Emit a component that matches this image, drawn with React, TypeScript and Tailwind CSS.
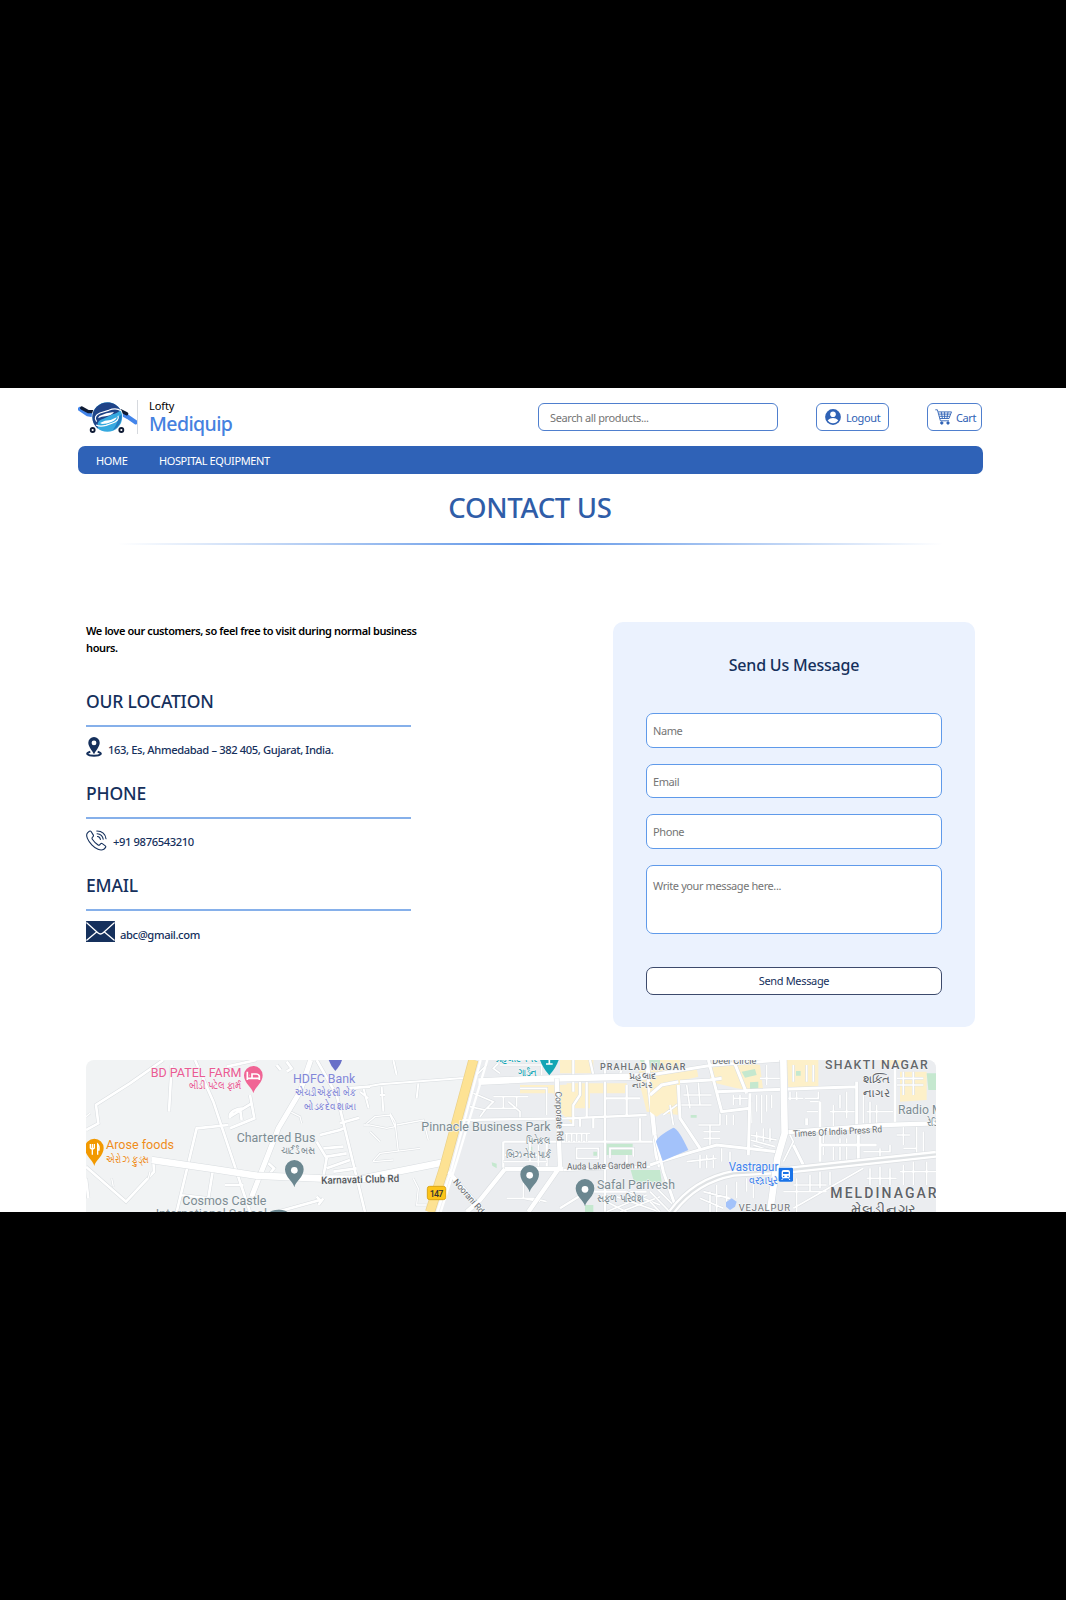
import type { ReactNode } from "react";

type LabelProps = {
  x: number;
  y: number;
  size: number;
  w: number;
  fill?: string;
  weight?: number;
  rotate?: number;
  spaced?: boolean;
  children: ReactNode;
};

function Label({ x, y, size, w, fill = "#7d8c93", weight = 400, rotate = 0, spaced = false, children }: LabelProps) {
  return (
    <text
      x={x}
      y={y}
      fontSize={size}
      textLength={w}
      lengthAdjust={spaced ? "spacing" : "spacingAndGlyphs"}
      fontWeight={weight}
      fill={fill}
      stroke="#f4f6f7"
      strokeWidth={4}
      strokeLinejoin="round"
      paintOrder="stroke"
      transform={rotate ? `rotate(${rotate} ${x} ${y})` : undefined}
    >
      {children}
    </text>
  );
}

function Pin({ x, y, color, children }: { x: number; y: number; color: string; children?: ReactNode }) {
  return (
    <g transform={`translate(${x} ${y})`}>
      <path d="M0 0C-4-18-28-30-28-54a28 28 0 0 1 56 0C28-30 4-18 0 0Z" fill={color} />
      {children ?? <circle cy={-51} r={10} fill="#fff" />}
    </g>
  );
}

function Roads({ d, w }: { d: string; w: number }) {
  return (
    <>
      <path d={d} stroke="#d9dde0" strokeWidth={w + 3} />
      <path d={d} stroke="#fff" strokeWidth={w} />
    </>
  );
}

function CityMap() {
  return (
    <svg className="block h-[152px] w-[850px] rounded-t-lg" viewBox="86 1060 850 152" fontFamily="Roboto, 'Noto Sans', sans-serif">
      <rect x="86" y="1060" width="850" height="152" fill="#f1f3f4" />
      <path d="M475 1060H936V1212H440Z" fill="#ebedf0" />

      <g transform="translate(360 1045) scale(.33333)" fill="none">
        <path d="M480 120H600L640 118V240L600 200L580 145H480ZM620 115H800V145H690V190H620ZM840 45H960V210L860 200L835 100ZM600 45H700V85H600Z" fill="#fdf0c9" />
        <path d="M735 296H818V330H735ZM812 375H900V410H822ZM840 45H900V68H850ZM395 352L410 356V370L397 362ZM675 480H700V501H675ZM505 305h12v14h-12ZM700 320h12v12h-12Z" fill="#c5e8cf" />
        <Roads w={6} d="M0 128L60 118L300 100L340 100M10 128L26 190M65 125L70 200M100 45L110 90M170 160L175 115M60 150H75M0 140L25 160" />
        <Roads w={4} d="M15 240L45 215L90 210L105 245L80 250L20 238M90 205L105 230L115 320M110 240L190 225L205 285M38 350L60 325L180 310M40 350L100 345M30 260L60 290M160 400L175 430L170 480L200 480" />
        <Roads w={5} d="M340 145L400 170L380 190L470 190M400 155H505M430 155V190M470 155V185M480 130H560V210M420 60H545V95M420 85L400 70L415 55M350 90L380 60M445 170L480 200V220M330 185L375 195L360 215" />
        <Roads w={7} d="M300 225L620 220L860 210M430 290V372M430 290H600M435 330H560M560 290V372M600 290H880M735 110V440M600 240L640 240V180L660 150V110M680 110V220M660 220V245M700 220V250M735 160H840M640 140V45M800 120V215M735 90V45M690 45L700 90M780 90L790 50M840 220V290M605 375L870 365M700 440H860M600 490L680 440M735 440V500M800 330V365" />
        <Roads w={5} d="M615 265H690M620 265V290M635 265V290M650 265V290M665 265V290M680 265V290M510 290V350M535 300V370M430 350H560M490 400V460L540 470M440 460H520L560 470M440 540V501M750 340L750 310H820V335M650 310H715V340H650ZM770 455L900 501M800 440L900 480M740 500L860 450M780 501L900 455M740 470L800 501" />
        <Roads w={20} d="M355 110L520 102L900 93" />
        <Roads w={13} d="M590 100L600 365L505 501M860 45L890 330L900 365M435 372H610M435 372L360 465L320 501M265 380L370 501" />
        <Roads w={20} d="M0 402L260 350" />
        <path d="M362 45L275 370L232 501M382 45L293 340L242 501" stroke="#fff" strokeWidth={7} />
        <path d="M340 45L252 370L210 501" stroke="#e9d08a" strokeWidth={30} />
        <path d="M340 45L252 370L210 501" stroke="#fde293" strokeWidth={26} />
      </g>

      <g transform="translate(70 1045) scale(.33333)" fill="none">
        <Roads w={8} d="M280 45L180 115L78 180L85 235L48 255M305 60L297 200M375 45L430 170L540 501M540 150L553 220L480 250M475 240L380 250L320 501M250 345L252 380L168 470L48 365M48 400L55 460M740 45L800 150L885 501M480 215L545 175M510 190L515 225M620 60L632 75M650 50L665 70L650 80M560 45L470 65M595 355L612 370L600 385M465 420H520M428 380L415 460L330 450M830 130L900 125M810 235L868 218M750 270L810 255L820 250M760 310L820 305M770 335L830 325M770 370L840 345M740 290L770 340L760 395M790 380L860 370M620 501L750 465L740 455M745 480L760 460M480 220C475 200 500 190 520 190" />
        <Roads w={4} d="M660 200L690 215L695 235M240 380L235 400M125 400L130 425M880 240H900M48 215L60 205" />
        <Roads w={15} d="M722 45L690 140L625 250L545 455" />
        <Roads w={20} d="M245 345L430 372L560 392L750 400L900 402" />
      </g>

      <g transform="translate(650 1045) scale(.33333)" fill="none">
        <path d="M0 95L60 85L85 130L70 180L20 215L0 200ZM70 75L140 70L145 95L80 110ZM180 70L270 50L330 60L340 140L260 130L180 110ZM410 45H505V130H415ZM750 80H830V165L750 170ZM690 45H760V65H690Z" fill="#fdf0c9" />
        <path d="M275 80L315 72L320 90L285 98ZM300 112L325 110V132H300ZM438 78H452V92H438ZM830 85H858V135H835ZM122 210H140V218H122ZM0 378L30 375L35 410H0Z" fill="#c5e8cf" />
        <Roads w={5} d="M40 210L80 180L185 180M60 180L70 240M110 120L120 190M145 110L150 180M100 150H185M180 240V300M160 260H210M160 280H210M145 240H210M210 205V240M230 210V240M250 210V240M300 270L380 285M300 285L375 305M310 300L370 320M320 260V290M340 250V290M360 250V290M305 170V235M320 150V200M335 150V235M350 150V200M365 150V190M250 160H295M250 150V180M270 150V180M415 160H460M420 140V165M440 140V165M465 160H505V140M480 170H510M470 200H510M550 180V260M540 200H620M570 150V190M590 140V220M640 150V235M660 170V235M680 180V235M650 200H730M520 260V330M550 300V345M570 280V345M590 280V345M640 320H720V300M690 310V345M760 245V300M740 270H780M800 245V330M820 260V320M760 310H800M740 100H820M740 120H820M760 80V150M790 80V150M350 60V120M330 100H390M430 60V110M470 60V110M490 60V110M150 330V370M170 330V370M190 330V370M215 310V350M240 320V350M110 350L200 340M410 250L430 290L400 350" />
        <Roads w={5} d="M200 420V501M230 420V470M260 410V460M290 400V440M310 410V460M160 440L240 460M150 460L220 490M180 440V501M440 400V501M480 390V440M510 380V430M540 380V420M660 370V420M690 365V420M720 370V420M760 360V420M790 350V420M830 350V420M650 400H740M750 380H858M400 440L530 440M430 420H530M0 440L60 501M0 470L30 501M20 430L70 480M640 370L430 490" />
        <Roads w={9} d="M0 90L190 60L400 45M0 150L35 120L85 110M90 110L180 105L215 100M175 45L215 200L300 190M85 120L90 220L150 310M0 360L30 350L130 320L200 300L380 320M300 145L295 330M200 140L620 125M250 45L290 145M735 45V240M620 110V250M470 220V240M510 170V350M625 270V360M510 300H680M430 300L470 380M15 270L40 380L75 480" />
        <Roads w={13} d="M404 262L700 240L858 235" />
        <path d="M18 290Q20 275 70 248Q85 250 115 315L38 348Z" fill="#a3c2fa" />
        <path d="M65 501C110 440 170 400 250 385L420 375L858 328" stroke="#dde0e3" strokeWidth={25} />
        <path d="M65 501C110 440 170 400 250 385L420 375L858 328" stroke="#fff" strokeWidth={21} />
        <path d="M65 501C110 440 170 400 250 385L420 375L858 328" stroke="#dfe2e4" strokeWidth={7} />
        <Roads w={20} d="M400 45L404 265L382 340L360 501" />
        <path d="M228 472L245 460L260 470L255 485L240 495L228 485Z" fill="#a3c2fa" />
      </g>

      <g transform="translate(70 1045) scale(.33333)">
        <Label x={242} y={95} size={38} w={272} fill="#ea5b93">BD PATEL FARM</Label>
        <Label x={356} y={132} size={30} w={158} fill="#ea5b93">બીડી પટેલ ફાર્મ</Label>
        <Pin x={550} y={145} color="#f06595">
          <path d="M-18-65V-40M-18-45H18V-40M18-45V-52Q16-58 8-58H-4V-46M-11-54h1" stroke="#fff" strokeWidth={5} fill="none" />
        </Pin>
        <Label x={108} y={312} size={37} w={204} fill="#ee8c1a">Arose foods</Label>
        <Label x={108} y={354} size={30} w={128} fill="#ee8c1a">એરોઝ ફુડ્સ</Label>
        <Pin x={73} y={363} color="#f29900">
          <path d="M-12-66V-54Q-6-48 0-54V-66M-6-66V-34M10-34V-66Q16-60 14-48H10" stroke="#fff" strokeWidth={4} fill="none" />
        </Pin>
        <path d="M776 45H816Q812 60 796 78Q782 62 776 45Z" fill="#6970c8" />
        <Label x={669} y={113} size={37} w={187} fill="#8286d8">HDFC Bank</Label>
        <Label x={674} y={152} size={30} w={182} fill="#8286d8">એચડીએફસી બેંક</Label>
        <Label x={702} y={196} size={30} w={154} fill="#8286d8">બોડકદેવ શાખા</Label>
        <Label x={500} y={290} size={37} w={236}>Chartered Bus</Label>
        <Label x={632} y={328} size={30} w={104}>ચાર્ટર્ડ બસ</Label>
        <Pin x={673} y={427} color="#6b8790" />
        <Label x={754} y={417} size={31} w={234} rotate={-1.5} weight={500} fill="#54585c">Karnavati Club Rd</Label>
        <Label x={337} y={479} size={37} w={252}>Cosmos Castle</Label>
        <Label x={257} y={519} size={37} w={334}>International School</Label>
        <path d="M598 504a28 10 0 0 1 56 0Z" fill="#6b8790" />
      </g>

      <g transform="translate(360 1045) scale(.33333)">
        <Label x={407} y={52} size={30} w={125} fill="#12a5b5">પ્રહલાદનગર</Label>
        <Label x={474} y={92} size={30} w={56} fill="#12a5b5">ગાર્ડન</Label>
        <path d="M540 45H596Q588 68 568 91Q548 68 540 45Z" fill="#12a5b5" />
        <path d="M558 57h20M568 45v12" stroke="#fff" strokeWidth={5} />
        <Label x={720} y={75} size={27} w={256} spaced weight={500} fill="#6e7276">PRAHLAD NAGAR</Label>
        <Label x={808} y={103} size={25} w={80} fill="#6e7276">પ્રહલાદ</Label>
        <Label x={816} y={130} size={25} w={60} fill="#6e7276">નાગર</Label>
        <Label x={184} y={257} size={37} w={388}>Pinnacle Business Park</Label>
        <Label x={498} y={297} size={30} w={74}>પિનેકલ</Label>
        <Label x={438} y={340} size={30} w={134}>બિઝનેસ પાર્ક</Label>
        <Label x={586} y={140} size={27} w={148} rotate={88} fill="#65696d">Corporate Rd</Label>
        <Label x={621} y={374} size={28} w={239} rotate={-1} fill="#65696d">Auda Lake Garden Rd</Label>
        <Label x={278} y={412} size={27} w={126} rotate={49} fill="#65696d">Noorani Rd</Label>
        <Pin x={509} y={442} color="#6b8790" />
        <Pin x={675} y={484} color="#6b8790" />
        <Label x={711} y={433} size={37} w={234}>Safal Parivesh</Label>
        <Label x={711} y={472} size={30} w={140}>સફળ પરિવેશ</Label>
        <rect x={202} y={424} width={55} height={40} rx={7} fill="#fcc419" stroke="#dba515" strokeWidth={3} />
        <text x={209} y={455} fontSize={27} textLength={41} fontWeight={500} fill="#333">147</text>
      </g>

      <g transform="translate(650 1045) scale(.33333)">
        <Label x={187} y={56} size={26} w={132} fill="#65696d">Deer Circle</Label>
        <Label x={525} y={73} size={37} w={308} spaced weight={500} fill="#63676b">SHAKTI NAGAR</Label>
        <Label x={640} y={114} size={32} w={78} fill="#5f6368">શક્તિ</Label>
        <Label x={640} y={157} size={32} w={80} fill="#5f6368">નાગર</Label>
        <Label x={744} y={208} size={37} w={155}>Radio Mir</Label>
        <Label x={830} y={243} size={30} w={60}>રેડિયો</Label>
        <Label x={430} y={276} size={27} w={267} rotate={-3} fill="#65696d">Times Of India Press Rd</Label>
        <Label x={236} y={378} size={36} w={149} fill="#3f83ee">Vastrapur</Label>
        <Label x={297} y={417} size={33} w={88} fill="#3f83ee">વસ્ત્રાપુર</Label>
        <rect x={386} y={368} width={43} height={42} rx={4} fill="#1a73e8" />
        <rect x={395} y={375} width={25} height={25} rx={6} fill="#fff" />
        <path d="M399 381h17v6h-17zM399 392h4v4h-4zM412 392h4v4h-4z" fill="#1a73e8" />
        <path d="M399 400l-4 5M416 400l4 5" stroke="#fff" strokeWidth={3} />
        <Label x={541} y={460} size={42} w={319} spaced weight={500} fill="#5f6368">MELDINAGAR</Label>
        <Label x={604} y={506} size={40} w={194} fill="#5f6368">મેલડીનગર</Label>
        <Label x={266} y={497} size={28} w={154} spaced fill="#6e7276">VEJALPUR</Label>
      </g>
    </svg>
  );
}

function Logo() {
  return (
    <svg className="h-8 w-[60px] shrink-0" viewBox="0 0 180 96">
      <path d="M6 24L28 39L50 43M124 34L150 48L173 64" fill="none" stroke="#4385ea" strokeWidth={13} strokeLinejoin="round" strokeLinecap="round" />
      <path d="M11 21L31 32L50 32M128 29L146 38" fill="none" stroke="#0e1a33" strokeWidth={10} strokeLinecap="round" />
      <circle cx={88} cy={48} r={47} fill="#fff" />
      <circle cx={88} cy={48} r={44.500} fill="#36a9df" />
      <path d="M131 40C132 62 122 80 104 88C114 74 120 62 120 50Z" fill="#2379bd" />
      <path d="M60 83C38 68 38 34 56 17C76-2 112-1 128 27C122 34 112 38 104 40L76 53C60 57 56 68 60 83Z" fill="#1f4387" />
      <path d="M129 29C118 22 106 22 92 28L66 36C52 42 48 52 56 62M120 44C124 54 116 62 104 66L84 73C70 77 62 76 54 72" fill="none" stroke="#fff" strokeWidth={3.500} />
      <path d="M64 45Q84 35 108 33Q100 44 82 46Q72 46 60 52Z" fill="#fff" />
      <path d="M66 66Q80 57 98 57L116 49Q114 58 102 62Q86 69 72 69Z" fill="#fff" />
      <circle cx={44} cy={87} r={6} fill="#fff" stroke="#0e1a33" strokeWidth={5.500} />
      <circle cx={130} cy={87} r={6} fill="#fff" stroke="#0e1a33" strokeWidth={5.500} />
    </svg>
  );
}

function UserIcon() {
  return (
    <svg className="size-4 shrink-0" viewBox="0 0 16 16">
      <circle cx={8} cy={8} r={7.9} fill="#2f62b5" />
      <circle cx={8} cy={5.2} r={2.8} fill="#fff" />
      <path d="M2.7 11.2Q5 8.9 8 8.9t5.3 2.3A6.2 6.2 0 0 1 8 14.2a6.2 6.2 0 0 1-5.3-3Z" fill="#fff" />
    </svg>
  );
}

function CartIcon() {
  return (
    <svg className="h-4 w-[17px] shrink-0" viewBox="0 0 17 16" fill="none" stroke="#2f62b5" strokeWidth={0.9}>
      <path d="M.3.8H2.4L5.4 11.8H14M3.2 2.9H16.5L14 9.5H4.9M3.8 5.1H15.6M4.3 7.3H14.8M6.3 2.9L7.4 9.5M9.6 2.9V9.5M13 2.9L11.9 9.5" />
      <circle cx={6.8} cy={14} r={1.2} fill="#2f62b5" />
      <circle cx={13} cy={14} r={1.2} fill="#2f62b5" />
    </svg>
  );
}

function LocationIcon() {
  return (
    <svg className="h-5 w-4 shrink-0" viewBox="0 0 16 20">
      <path d="M4.3 14.7C-1 16 .8 18.8 8 18.8S17 16 11.700 14.700" fill="none" stroke="#15305c" strokeWidth={2} />
      <path d="M8 17.200C6 13.500 2.300 9.500 2.300 5.800a5.700 5.700 0 0 1 11.400 0C13.700 9.500 10 13.500 8 17.200Z" fill="#15305c" />
      <circle cx={8} cy={5.900} r={2.400} fill="#fff" />
    </svg>
  );
}

function PhoneIcon() {
  return (
    <svg className="size-[21px] shrink-0" viewBox="0 0 21 21" fill="none" stroke="#15305c" strokeWidth={1.1} strokeLinecap="round" strokeLinejoin="round">
      <path d="M3.400 1.200L1.500 2.900C-.8 5.500 2.100 11 5.800 14.900S14.700 21.300 17.800 19.300L19.500 17.500Q20.200 16.700 19.300 15.900L16.300 13.600Q15.500 13.100 14.800 13.700L13.500 15Q12.700 15.500 11.800 14.800Q8.600 12.500 6.300 9.200Q5.700 8.300 6.300 7.500L7.200 6.400Q7.700 5.700 7.200 4.900L5.100 1.500Q4.400.6 3.400 1.200Z" />
      <path d="M11.500 6.500Q14 6.700 14.400 9.500M11.100 3.700Q16.400 4 17.200 9.200M10.800 1Q19 1.200 20 8.800" />
    </svg>
  );
}

function MailIcon() {
  return (
    <svg className="h-[21px] w-[29px] shrink-0" viewBox="0 0 29 21">
      <rect width={29} height={21} rx={0.6} fill="#15305c" />
      <path d="M.4 1.500L11.800 11.800Q14.500 14.200 17.200 11.800L28.600 1.500M.4 19.500L10.600 10.900M28.600 19.500L18.400 10.900" fill="none" stroke="#fff" strokeWidth={1.3} />
    </svg>
  );
}

function ContactBlock({ title, titleClass, bodyClass, icon, children }: { title: string; titleClass: string; bodyClass: string; icon: ReactNode; children: ReactNode }) {
  return (
    <section className="w-[325px] text-[#15305c]">
      <h2 className={`border-b-2 border-[#86b0ea] text-[17.5px] leading-6 font-medium tracking-[-0.17px] ${titleClass}`}>{title}</h2>
      <div className={`flex items-start text-[11.2px] leading-4 font-medium tracking-[-0.38px] ${bodyClass}`}>
        {icon}
        {children}
      </div>
    </section>
  );
}

const field =
  "block w-full rounded-[7px] border border-[#5f9aea] bg-white px-1.5 text-[11px] tracking-[-0.4px] placeholder:text-[#757575] outline-none";

export default function App() {
  return (
    <div className="h-[1600px] w-[1066px] overflow-hidden bg-black py-[388px] font-['Noto_Sans','Open_Sans',sans-serif]">
      <main className="h-[824px] overflow-hidden bg-white">
        <header className="flex h-[58px] pr-[84px] pl-[78px]">
          <div className="mt-3 flex h-[34px] w-[460px]">
            <div className="-mr-px pt-[1px]"><Logo /></div>
            <div className="h-[34px] w-px shrink-0 bg-[#d6d9de]" />
            <div className="ml-[11px] flex flex-col">
              <span className="mt-[-2px] h-4 text-[11px] leading-[15px] tracking-[-0.1px] text-black">Lofty</span>
              <span className="text-[19.5px] leading-5 font-medium tracking-[-0.6px] text-[#4581e0]">Mediquip</span>
            </div>
          </div>
          <input
            className="mt-[15px] h-7 w-[240px] rounded-[6px] border border-[#4f7fce] px-[11px] text-[11px] tracking-[-0.38px] placeholder:text-[#757575]"
            placeholder="Search all products..."
          />
          <button className="mt-[15px] ml-[38px] flex h-7 w-[73px] items-center rounded-[6px] border border-[#4f7fce] pl-2 text-[11px] text-[#2f62b5]">
            <UserIcon />
            <span className="mt-0.5 ml-[5px] tracking-[-0.4px]">Logout</span>
          </button>
          <button className="mt-[15px] ml-[38px] flex h-7 w-[55px] items-center rounded-[6px] border border-[#4f7fce] pl-[7px] text-[11px] text-[#2f62b5]">
            <CartIcon />
            <span className="mt-0.5 ml-1 tracking-[-0.4px]">Cart</span>
          </button>
        </header>

        <nav className="ml-[78px] flex h-7 w-[905px] items-center rounded-[7px] bg-[#2f62b7] pt-0.5 pl-[18px] text-[11px] text-white">
          <a className="w-[63px] tracking-[-0.35px]">HOME</a>
          <a className="tracking-[-0.4px]">HOSPITAL EQUIPMENT</a>
        </nav>

        <h1 className="mt-[14px] h-10 pr-1.5 text-center text-[27.5px] leading-10 font-medium tracking-[-0.3px] text-[#2f5da8]">CONTACT US</h1>
        <div className="mt-[15px] ml-[118px] h-0.5 w-[825px] bg-linear-to-r from-transparent via-[#5c93e6] to-transparent" />

        <div className="mt-[77px] flex h-[405px] pl-[86px]">
          <div className="w-[527px]">
            <p className="w-[340px] pt-px text-[11px] leading-[16.5px] font-semibold tracking-[-0.39px] text-black">We love our customers, so feel free to visit during normal business hours.</p>
            <ContactBlock title="OUR LOCATION" titleClass="mt-[33px] h-[38px]" bodyClass="pt-[10px] h-[54px]" icon={<LocationIcon />}>
              <span className="mt-[5px] ml-1.5 whitespace-nowrap">163, Es, Ahmedabad – 382 405, Gujarat, India.</span>
            </ContactBlock>
            <ContactBlock title="PHONE" titleClass="h-[38px]" bodyClass="pt-[11px] h-[54px]" icon={<PhoneIcon />}>
              <span className="mt-1 ml-1.5">+91 9876543210</span>
            </ContactBlock>
            <ContactBlock title="EMAIL" titleClass="h-[38px]" bodyClass="pt-[10px]" icon={<MailIcon />}>
              <span className="mt-1.5 ml-[5px]">abc@gmail.com</span>
            </ContactBlock>
          </div>

          <form className="h-[405px] w-[362px] rounded-[10px] bg-[#ebf2fe] px-[33px]" onSubmit={(e) => e.preventDefault()}>
            <h2 className="pt-[31px] text-center text-[16px] leading-6 font-medium tracking-[-0.2px] text-[#15305c]">Send Us Message</h2>
            <div className="mt-9 flex flex-col gap-4">
              <input className={`h-[35px] ${field}`} placeholder="Name" />
              <input className={`h-[34px] ${field}`} placeholder="Email" />
              <input className={`h-[35px] ${field}`} placeholder="Phone" />
              <textarea className={`h-[69px] resize-none pt-3 ${field}`} placeholder="Write your message here..." />
            </div>
            <button className="mt-[33px] h-7 w-full rounded-[7px] border border-[#3c4a6c] bg-white text-[11px] tracking-[-0.35px] text-[#15305c]">Send Message</button>
          </form>
        </div>

        <div className="mt-[33px] ml-[86px]">
          <CityMap />
        </div>
      </main>
    </div>
  );
}
